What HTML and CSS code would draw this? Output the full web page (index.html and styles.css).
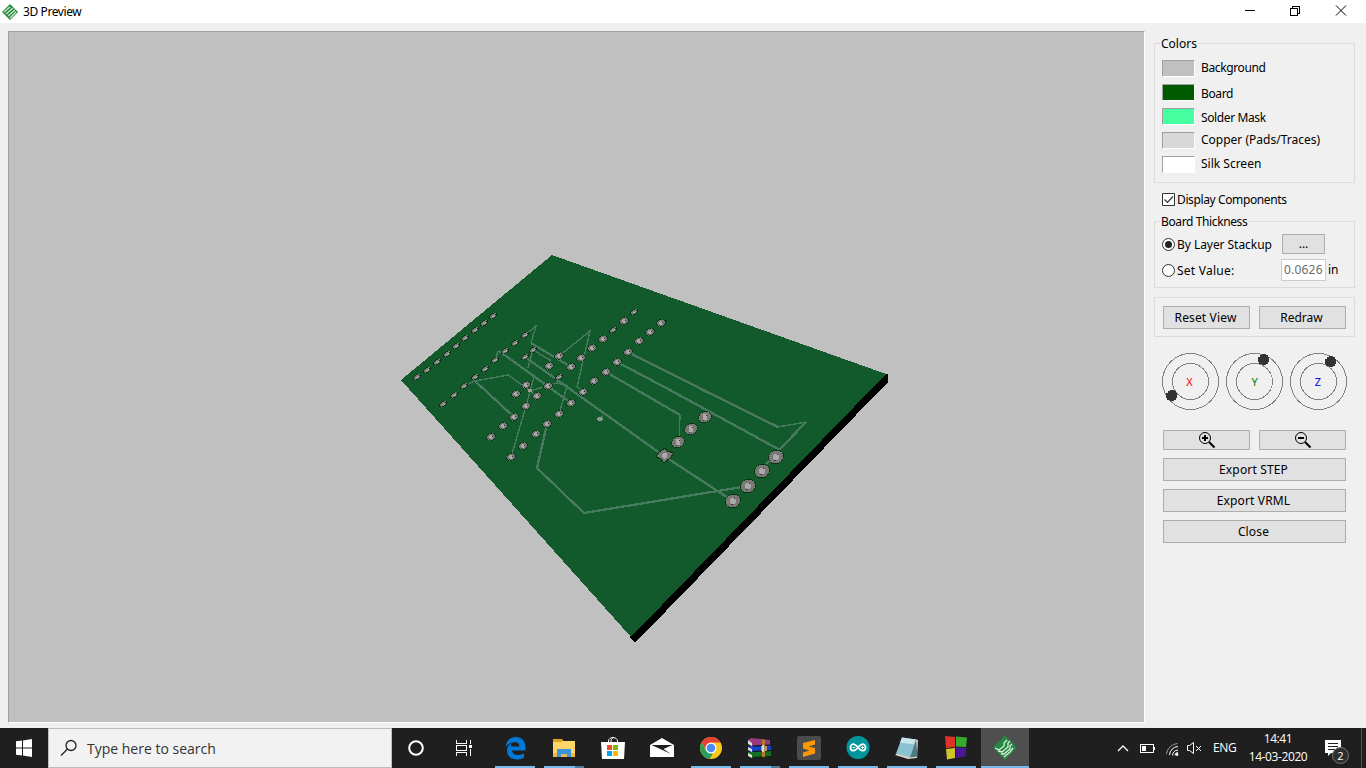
FILE: index.html
```html
<!DOCTYPE html>
<html lang="en">
<head>
<meta charset="utf-8">
<title>3D Preview</title>
<link rel="stylesheet" href="styles.css">
</head>
<body>
<header class="titlebar">
  <svg class="app-icon" width="18" height="18" viewBox="0 0 18 18"><path d="M9 1l8 8-8 8-8-8z" fill="#2b8a3c"/><path d="M3 9l6-5M5 11l7-6M7 13l7-6M9 15l6-6" stroke="#d5ecd8" stroke-width="1.1"/></svg>
  <span class="title">3D Preview</span>
  <svg class="win-buttons" width="130" height="23" viewBox="1236 0 130 23" fill="none" stroke="#000" shape-rendering="crispEdges"><path d="M1245 10.500h10M1290.500 8.500h7v7h-7zM1292.500 8v-1.500h7v7h-2"/><path d="M1336 5.500l10 10M1346 5.500l-10 10" shape-rendering="auto"/></svg>
</header>
<main class="main">
  <section class="viewport">
    <svg width="1134" height="689" viewBox="9 32 1134 689" shape-rendering="crispEdges">
      <defs>
        <g id="s"><g transform="rotate(-32)"><ellipse rx="4.600" ry="2.600" fill="#083410"/><ellipse rx="3.700" ry="1.900" fill="#7c7c7c"/></g><path d="M-1 .5h2v-1h1" stroke="#aaa" fill="none"/><path d="M-3 2.500h1M2 -1.500h1" stroke="#222"/></g>
        <g id="m"><g transform="rotate(-32)"><ellipse rx="5" ry="3.800" fill="#06340d"/><ellipse rx="4.300" ry="3" fill="#777"/></g><ellipse rx="1.800" ry="2" fill="#aaa"/><path d="M1 -.5h1M-2 2.500h1" stroke="#333"/></g>
        <g id="b"><g transform="rotate(-28)"><ellipse rx="7" ry="5.700" fill="#06340d"/><ellipse rx="6.300" ry="5" fill="#7b7777"/></g><ellipse rx="2.500" ry="3" fill="#aaa"/><path d="M1 -1.500h1M-2 3.500h1" stroke="#333"/></g>
        <g id="l"><g transform="rotate(-20)"><ellipse rx="8" ry="7" fill="#06340d"/><ellipse rx="7.400" ry="6.300" fill="#7b7777"/></g><ellipse rx="3" ry="3.500" fill="#aaa"/><path d="M1 -2.500h1M-2 3.500h2" stroke="#333"/></g>
      </defs>
      <path d="M884 373l4 1.500v7.500l-253 261-5-6z" fill="#000"/>
      <path d="M552 255l334 119-255 263L401 380z" fill="#12592b"/>
      <g fill="none" stroke="#487a60" stroke-width="1.400">
        <path d="M525 335l11-9-5 17M464 386l11-5 33-6 29 21M533 350l-5 18M533 350l17 10-1 6M559 356l31-25-13 56 6 5M530 391l27-8 10 3-8 28M534 377l-4 14-4 15-15 51M498 351l-3 9M680 415l-1 27M778 427l28-5M600 419l3-4"/>
      </g>
      <g fill="none" stroke="#487a60" stroke-width="2.300">
        <path d="M531 343l40 24M475 381l39 36M499 351l72 52M525 357l139 99 69 45M628 352l75 38 75 37M806 422l-44 46M617 362l53 28 108 59v8M606 372l74 43M547 424l-10 44 47 45 164-27"/>
      </g>
      <g>
        <use href="#s" x="417" y="377"/><use href="#s" x="427" y="370"/><use href="#s" x="437" y="362"/><use href="#s" x="447" y="354"/><use href="#s" x="456" y="346"/><use href="#s" x="465" y="338"/><use href="#s" x="475" y="330"/><use href="#s" x="484" y="323"/><use href="#s" x="493" y="316"/>
        <use href="#s" x="443" y="404"/><use href="#s" x="454" y="395"/><use href="#s" x="464" y="386"/><use href="#s" x="475" y="377"/><use href="#s" x="485" y="369"/><use href="#s" x="495" y="360"/><use href="#s" x="505" y="351"/><use href="#s" x="515" y="343"/><use href="#s" x="525" y="335"/>
        <use href="#s" x="533" y="350"/><use href="#s" x="525" y="357"/><use href="#m" x="559" y="356"/><use href="#m" x="549" y="366"/><use href="#m" x="571" y="367"/><use href="#s" x="559" y="377"/>
        <use href="#m" x="581" y="358"/><use href="#m" x="592" y="348"/><use href="#m" x="603" y="339"/><use href="#s" x="613" y="330"/><use href="#m" x="624" y="321"/><use href="#s" x="634" y="312"/>
        <path d="M656 322l4-3 7 1-2 5h-5z" fill="#062d08"/>
        <use href="#m" x="661" y="323"/><use href="#m" x="650" y="332"/><use href="#m" x="639" y="341"/><use href="#m" x="628" y="352"/><use href="#m" x="617" y="362"/><use href="#m" x="606" y="372"/><use href="#m" x="594" y="381"/><use href="#m" x="583" y="392"/><use href="#m" x="571" y="403"/>
        <use href="#m" x="548" y="386"/><use href="#m" x="537" y="396"/><use href="#m" x="526" y="385"/><use href="#m" x="516" y="394"/><use href="#m" x="526" y="406"/>
        <use href="#m" x="559" y="414"/><use href="#m" x="547" y="424"/><use href="#m" x="536" y="434"/><use href="#m" x="523" y="446"/><use href="#m" x="511" y="457"/><use href="#m" x="514" y="417"/><use href="#m" x="503" y="426"/><use href="#m" x="491" y="437"/>
        <ellipse cx="600" cy="419" rx="3" ry="2" fill="#879b8f"/><ellipse cx="530" cy="390.500" rx="2" ry="1.500" fill="#a69a98"/>
        <path d="M656 457l3-5 6-4 2 3 7 2-4 5-6 5-3-4z" fill="#7b7777" stroke="#06340d"/><ellipse cx="664.500" cy="455.500" rx="2.500" ry="3" fill="#aaa"/>
        <use href="#b" x="678" y="442"/><use href="#b" x="691" y="429"/><use href="#b" x="705" y="417"/>
        <use href="#l" x="776" y="457"/><use href="#l" x="762" y="471"/><use href="#l" x="748" y="486"/><use href="#l" x="733" y="501"/>
      </g>
    </svg>
  </section>
  <aside class="panel">
    <div class="group colors">
      <span class="legend">Colors</span>
      <div class="color-row"><i class="swatch sw-bg"></i><span class="tight">Background</span></div>
      <div class="color-row low"><i class="swatch sw-board"></i><span class="tight">Board</span></div>
      <div class="color-row low"><i class="swatch sw-mask"></i><span class="tight">Solder Mask</span></div>
      <div class="color-row"><i class="swatch sw-copper"></i><span>Copper (Pads/Traces)</span></div>
      <div class="color-row"><i class="swatch sw-silk"></i><span>Silk Screen</span></div>
    </div>
    <label class="check"><svg width="13" height="13" viewBox="0 0 13 13"><path d="M.5.5h12v12H.5z" fill="#fff" stroke="#333"/><path d="M2.500 6.500l3 3 5.500-6" fill="none" stroke="#333" stroke-width="1.200"/></svg><span class="tight">Display Components</span></label>
    <div class="group thickness">
      <span class="legend tight">Board Thickness</span>
      <div class="option"><svg width="13" height="13" viewBox="0 0 13 13"><circle cx="6.500" cy="6.500" r="6" fill="#fff" stroke="#333"/><circle cx="6.500" cy="6.500" r="3.500" fill="#222"/></svg><span class="opt-label stackup">By Layer Stackup</span><button class="btn dots">...</button></div>
      <div class="option second"><svg width="13" height="13" viewBox="0 0 13 13"><circle cx="6.500" cy="6.500" r="6" fill="#fff" stroke="#333"/></svg><span class="opt-label setval">Set Value:</span><span class="field">0.0626</span><span class="unit">in</span></div>
    </div>
    <div class="group actions"><button class="btn reset">Reset View</button><button class="btn">Redraw</button></div>
    <div class="dials">
      <svg width="192" height="58" viewBox="1162 352 192 58">
        <g fill="none" stroke="#808080" shape-rendering="crispEdges"><circle cx="1190.500" cy="381.500" r="28"/><circle cx="1190.500" cy="381.500" r="18"/><circle cx="1254.500" cy="381.500" r="28"/><circle cx="1254.500" cy="381.500" r="18"/><circle cx="1318.500" cy="381.500" r="28"/><circle cx="1318.500" cy="381.500" r="18"/></g>
        <g fill="#333"><path id="knob" d="M1168 391h2v-1h4v1h2v2h1v5h-1v2h-2v1h-4v-1h-3v-2h-1v-5h2z"/><use href="#knob" x="92" y="-36"/><use href="#knob" x="159" y="-34"/></g>
        <g class="axes"><text x="1189.500" y="386" fill="#f00">X</text><text x="1254.500" y="386" fill="#008000">Y</text><text x="1318" y="386" fill="#00f">Z</text></g>
      </svg>
    </div>
    <div class="zooms">
      <button class="btn"><svg width="18" height="18" viewBox="0 0 18 18" fill="none" stroke="#000"><circle cx="7" cy="7" r="5.500"/><path d="M4 7h6M7 4v6M11 11l5.500 5.500" stroke-width="2"/></svg></button>
      <button class="btn"><svg width="18" height="18" viewBox="0 0 18 18" fill="none" stroke="#000"><circle cx="7" cy="7" r="5.500"/><path d="M4 7h6M11 11l5.500 5.500" stroke-width="2"/></svg></button>
    </div>
    <div class="exports"><button class="btn">Export STEP</button><button class="btn">Export VRML</button><button class="btn">Close</button></div>
  </aside>
</main>
<footer class="taskbar">
  <svg class="slot" width="48" height="40" viewBox="0 0 48 40"><path d="M16 13.300l6-.8v7h-6zM23 12.400l9-1.300v8.400h-9zM16 20.500h6v7l-6-.8zM23 20.500h9v8.400l-9-1.300z" fill="#fff"/></svg>
  <div class="search"><svg width="18" height="18" viewBox="0 0 18 18" fill="none" stroke="#222" stroke-width="1.300"><circle cx="11" cy="6.500" r="5"/><path d="M7.500 10L1 16.500"/></svg><span>Type here to search</span></div>
  <svg class="slot" width="48" height="40" viewBox="0 0 48 40"><circle cx="24" cy="20" r="6.800" fill="none" stroke="#fff" stroke-width="2"/></svg>
  <svg class="slot" width="48" height="40" viewBox="0 0 48 40" fill="none" stroke="#fff" shape-rendering="crispEdges"><path d="M16.500 12v3.500h10V12M16.500 28v-3.500h10V28M16.500 17.500h10v5h-10zM30.500 12v4M30.500 21v7"/><path d="M29 17h3v3h-3z" fill="#fff" stroke="none"/></svg>
  <div class="apps">
    <svg class="app run" viewBox="0 0 48 40"><path d="M14.500 19C15.500 12.500 19.500 9 25 9c6 0 9.500 4.500 9.500 10v3.500H21c.3 3 3 4.500 6 4.500 2.500 0 4.500-.7 6-1.700v4.500c-2 1-4.500 1.600-7 1.600-6 0-10-3.500-10-9 0-3.500 1.800-6 5-7.500-.8 1-1.200 2-1.200 3.500h8.500c0-2.800-1.300-4.200-4.300-4.200-4 0-7 1.600-9.500 4.800z" fill="#0078d7"/></svg>
    <svg class="app run multi" viewBox="0 0 48 40"><path d="M13 11h9l1 2h12v16H13z" fill="#ffd667"/><path d="M13 11h9l1 2-2 1h-8z" fill="#e1a21b"/><path d="M13 25h22v4H13z" fill="#f3b843"/><path d="M17 29v-8h14v8h-4v-3h-6v3z" fill="#3a95db"/></svg>
    <svg class="app" viewBox="0 0 48 40"><path d="M12 14h24l-1 17H13z" fill="#fff"/><path d="M19.500 15v-2c0-2 2-3.500 4.500-3.500s4.500 1.500 4.500 3.500v2M22 15v-2c0-1.500 1-3 3-3.500" fill="none" stroke="#fff"/><path d="M18 17h5v5h-5z" fill="#f25022"/><path d="M24 17h5v5h-5z" fill="#7fba00"/><path d="M18 23h5v5h-5z" fill="#00a4ef"/><path d="M24 23h5v5h-5z" fill="#ffb900"/></svg>
    <svg class="app" viewBox="0 0 48 40"><path d="M12 17l12-7 12 7v12H12z" fill="#fff"/><path d="M13.500 17h21l-9 4 7.500 5z" fill="#1e1e1e"/></svg>
    <svg class="app run" viewBox="0 0 48 40"><circle cx="24" cy="20" r="11" fill="#fbc91e"/><path d="M14.500 14.500A11 11 0 0 1 33.500 14.500H24l-4.500 8z" fill="#e34133"/><path d="M14.500 14.500l5 9 6.500 2-3.500 5.400A11 11 0 0 1 14.500 14.500z" fill="#279f5b"/><circle cx="24" cy="20" r="5.500" fill="#fff"/><circle cx="24" cy="20" r="4.300" fill="#4c8bf5"/></svg>
    <svg class="app run multi" viewBox="0 0 48 40"><path d="M12 12l3-2 19 2v6l-19 1z" fill="#983a7c"/><path d="M13 18l22-1v6l-21 1z" fill="#1741c8"/><path d="M12 24l23-1v6l-20 1-3-3z" fill="#166f22"/><path d="M12 12l4 3v3l-4-2zM12 19l4 2v3l-4-2zM12 25l4 2v3l-4-2z" fill="#ddd"/><path d="M17 18l18-1M17 23.500l18-1M17 29.500l18-1" stroke="#151515" stroke-width="1.200"/><path d="M26 11l3 1v17h-3z" fill="#b17b28"/><path d="M25 18h6v5h-6z" fill="#ad9667"/><path d="M27 17v7" stroke="#eee" stroke-width="1.500"/></svg>
    <svg class="app run" viewBox="0 0 48 40"><rect x="12" y="8" width="24" height="24" rx="2" fill="#4b4b4b"/><path d="M18 15l12-3v4.500L23.500 18.500 30 20v5.500L18 29v-4.500l6.500-2L18 20.500z" fill="#ff9800"/></svg>
    <svg class="app run" viewBox="0 0 48 40"><circle cx="24" cy="19.500" r="11.500" fill="#00979c"/><path d="M24 19.500c-5-6-7.500-2.700-7.500 0s3 5.500 7.500 0c5-6 7.500-2.700 7.500 0s-3 5.500-7.500 0z" fill="none" stroke="#fff" stroke-width="1.800"/><path d="M18.500 19.500h2.500M27 19.500h3M28.500 18v3" stroke="#fff"/></svg>
    <svg class="app run" viewBox="0 0 48 40"><path d="M31 11l4 1-1 18-9 1-13-4z" fill="#d7d4c5"/><path d="M19 9.500l14 2-6 18-14-4z" fill="#8bc2d2"/><path d="M19 9.500l14 2-2 5-14-2z" fill="#c9e5eb"/><path d="M33 11.500l1.500 17-7.500 1z" fill="#4d7783"/></svg>
    <svg class="app run" viewBox="0 0 48 40"><path d="M13 8l10 1v10l-9 1z" fill="#de3326"/><path d="M24 8.500l11 1-1 9.500-10-.5z" fill="#35aa2c"/><path d="M14 21l9-1v10l-8 1.500z" fill="#cec629"/><path d="M24 19.500l10.500.5-1 8.500-9.500 1.500z" fill="#4d1699"/></svg>
    <svg class="app run active" viewBox="0 0 48 40"><path d="M24 7.500l12 12L24 32 12 19.500z" fill="#258942"/><path d="M14 20l4 2 5-4v-3l3-3M17 23l4 1 6-5v-4l2-2M20 26h3l6-5v-3l2-2M23 29l6-5 3-4" fill="none" stroke="#d8eedc" stroke-width="1.300"/></svg>
  </div>
  <div class="tray">
    <svg width="108" height="40" viewBox="1108 728 108 40" fill="none" stroke="#fff"><path d="M1118 751l5-5 5 5" stroke-width="1.300"/><g shape-rendering="crispEdges"><path d="M1140.500 744.500h13v8h-13zM1154.500 747v3"/><path d="M1142 746h4v5h-4z" fill="#fff" stroke="none"/></g><path d="M1166.500 754a12 12 0 0 1 11-10.500" stroke="#999"/><path d="M1169.500 755a9 9 0 0 1 8.500-8.500M1172.500 755.500a6 6 0 0 1 5.500-5.500M1175 755.500a3 3 0 0 1 3-3"/><circle cx="1177" cy="754.500" r="1" fill="#fff"/><path d="M1187.500 745.500h2l4-3v11l-4-3h-2zM1196 746l5 5M1201 746l-5 5"/></svg>
    <span class="lang">ENG</span>
    <div class="clock"><span>14:41</span><span class="date">14-03-2020</span></div>
    <svg width="46" height="40" viewBox="1320 728 46 40"><path d="M1325 740h16v13h-10l-3 3v-3h-3z" fill="#fff"/><path d="M1328 743.500h10M1328 746.500h10M1328 749.500h7" stroke="#222"/><circle cx="1340.500" cy="755.500" r="8" fill="#2e2e2e" stroke="#777"/><text class="badge" x="1340.500" y="759.500">2</text><path d="M1361.500 728v40" stroke="#555"/></svg>
  </div>
</footer>
</body>
</html>
```
FILE: styles.css
```css
* { box-sizing: border-box; }
body { margin: 0; width: 1366px; height: 768px; overflow: hidden; display: flex; flex-direction: column; background: #f0f0f0; color: #000; font: 12px/16px "Noto Sans", sans-serif; }
svg { display: block; flex: none; }
.titlebar { height: 23px; background: #fff; display: flex; align-items: center; }
.app-icon { margin-left: 1px; }
.title { margin-left: 4px; letter-spacing: -.4px; }
.win-buttons { margin-left: auto; }
.main { height: 705px; display: flex; padding: 8px 0 0 8px; }
.viewport { width: 1137px; height: 692px; flex: none; overflow: hidden; background: #c0c0c0; border: 1px solid; border-color: #a0a0a0 #fff #fff #a0a0a0; }
.panel { margin-left: 9px; width: 201px; padding-top: 12px; white-space: nowrap; }
.tight { letter-spacing: -.38px; }
.group { border: 1px solid #dcdcdc; position: relative; }
.legend { position: absolute; left: 5px; top: -7px; padding: 0 1px; line-height: 14px; background: #f0f0f0; }
.colors { height: 140px; padding: 16px 0 0 7px; }
.color-row { height: 24px; display: flex; align-items: flex-start; gap: 6px; }
.low span { padding-top: 1px; line-height: 17px; }
.swatch { width: 33px; height: 17px; border: 1px solid; border-color: #a0a0a0 #fff #fff #a0a0a0; }
.sw-bg { background: #c0c0c0; }
.sw-board { background: #005a00; }
.sw-mask { background: #46ffa0; }
.sw-copper { background: #d8d8d8; }
.sw-silk { background: #fff; }
.check { height: 13px; margin: 10px 0 0 8px; display: flex; align-items: center; gap: 2px; }
.thickness { height: 67px; margin-top: 15px; padding: 12px 0 0 7px; }
.option { height: 20px; display: flex; align-items: center; }
.second { margin-top: 6px; }
.opt-label { margin-left: 2px; padding-top: 1px; }
.stackup { width: 105px; letter-spacing: -.05px; }
.setval { width: 104px; letter-spacing: .25px; }
.btn { height: 23px; padding: 0; border: 1px solid #adadad; border-radius: 0; background: #e1e1e1; color: #000; font: inherit; line-height: 18px; display: flex; align-items: center; justify-content: center; }
.dots { width: 43px; height: 20px; }
.field { width: 45px; height: 22px; padding-left: 2px; line-height: 20px; border: 1px solid #ccc; background: #fff; color: #6d6d6d; letter-spacing: .2px; }
.unit { margin-left: 2px; }
.actions { height: 40px; margin-top: 9px; padding: 8px 0 0 8px; display: flex; gap: 9px; }
.actions .btn, .zooms .btn { width: 87px; }
.actions .btn { padding-right: 2px; }
.reset { letter-spacing: .15px; }
.dials { margin: 15px 0 0 8px; }
.axes { font-size: 11px; text-anchor: middle; }
.zooms { margin: 20px 0 0 9px; display: flex; gap: 9px; }
.zooms .btn { height: 20px; }
.exports { margin: 8px 0 0 9px; display: flex; flex-direction: column; gap: 8px; width: 183px; }
.exports .btn { padding-right: 2px; letter-spacing: .15px; }
.taskbar { height: 40px; display: flex; background: #1f1f1f; color: #fff; }
.search { width: 344px; height: 40px; padding-left: 11px; display: flex; align-items: center; gap: 9px; background: #f2f2f2; border: 1px solid #bdbdbd; color: #333; font: 14px "Open Sans", sans-serif; }
.apps { margin-left: 3px; display: flex; gap: 1px; }
.app { width: 48px; height: 40px; }
.run { background: linear-gradient(#76b9ed, #76b9ed) 4px 38px / 40px 2px no-repeat; }
.multi { background: linear-gradient(90deg, #76b9ed 31px, #4d7b9e 31px) 4px 38px / 40px 2px no-repeat; }
.active { background: linear-gradient(#4f4f4f 38px, #76b9ed 38px); }
.tray { margin-left: auto; display: flex; align-items: center; font: 12px/18px "Open Sans", sans-serif; }
.lang { width: 23px; margin-left: -3px; letter-spacing: -.3px; }
.clock { width: 84px; display: flex; flex-direction: column; align-items: center; letter-spacing: -.4px; }
.badge { fill: #fff; font-size: 11px; text-anchor: middle; }
```
